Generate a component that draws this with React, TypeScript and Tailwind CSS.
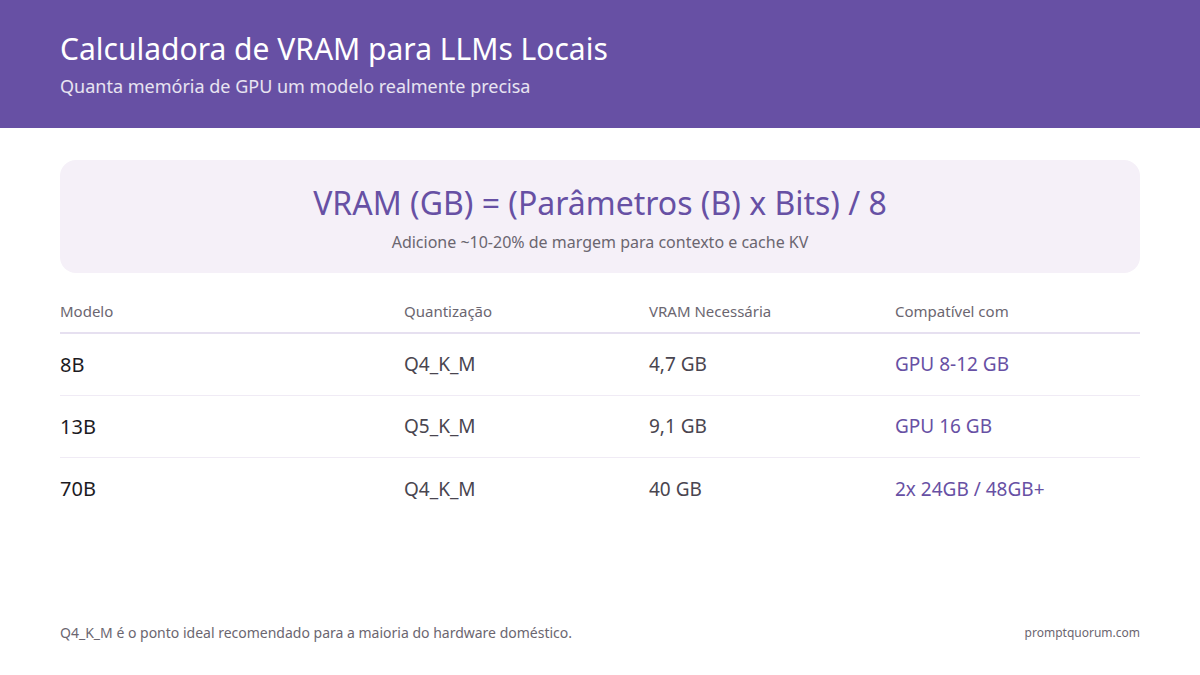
import React from "react";

const rows = [
  { model: "8B", quant: "Q4_K_M", vram: "4,7 GB", gpu: "GPU 8-12 GB" },
  { model: "13B", quant: "Q5_K_M", vram: "9,1 GB", gpu: "GPU 16 GB" },
  { model: "70B", quant: "Q4_K_M", vram: "40 GB", gpu: "2x 24GB / 48GB+" },
];

const cols = "grid grid-cols-[344px_245px_246px_1fr]";

export default function App() {
  return (
    <div className="w-[1200px] h-[675px] bg-white flex flex-col font-['Noto_Sans',sans-serif] overflow-hidden">
      <header className="h-[128px] bg-[#6750a4] px-[60px] pt-[29px] text-white">
        <h1 className="text-[30px] leading-[40px]">Calculadora de VRAM para LLMs Locais</h1>
        <p className="mt-[5px] text-[18px] leading-[25px] text-white/85">
          Quanta memória de GPU um modelo realmente precisa
        </p>
      </header>

      <main className="flex-1 px-[60px] pt-[32px] flex flex-col">
        <div className="h-[113px] rounded-[16px] bg-[#f5f0f8] flex flex-col items-center pt-[21px]">
          <div className="text-[32px] leading-[44px] text-[#6750a4]">
            VRAM (GB) = (Parâmetros (B) x Bits) / 8
          </div>
          <div className="mt-[6px] text-[16px] leading-[22px] text-[#6b6670]">
            Adicione ~10-20% de margem para contexto e cache KV
          </div>
        </div>

        <div className="mt-[21px]">
          <div className={`${cols} h-[40px] pb-[3px] items-center border-b-2 border-[#e6e0f0] text-[15px] text-[#6b6670]`}>
            <div>Modelo</div>
            <div>Quantização</div>
            <div>VRAM Necessária</div>
            <div>Compatível com</div>
          </div>
          {rows.map((r, i) => (
            <div
              key={r.model}
              className={`${cols} h-[62px] items-center text-[19px] ${i < rows.length - 1 ? "border-b border-[#f0ebf5]" : ""}`}
            >
              <div className="text-[20px] text-[#1c1b1f]">{r.model}</div>
              <div className="text-[#49454f]">{r.quant}</div>
              <div className="text-[#49454f]">{r.vram}</div>
              <div className="text-[#6750a4]">{r.gpu}</div>
            </div>
          ))}
        </div>

        <footer className="mt-auto mb-[32px] flex justify-between items-center text-[#6b6670]">
          <span className="text-[14px]">Q4_K_M é o ponto ideal recomendado para a maioria do hardware doméstico.</span>
          <span className="text-[12px]">promptquorum.com</span>
        </footer>
      </main>
    </div>
  );
}
